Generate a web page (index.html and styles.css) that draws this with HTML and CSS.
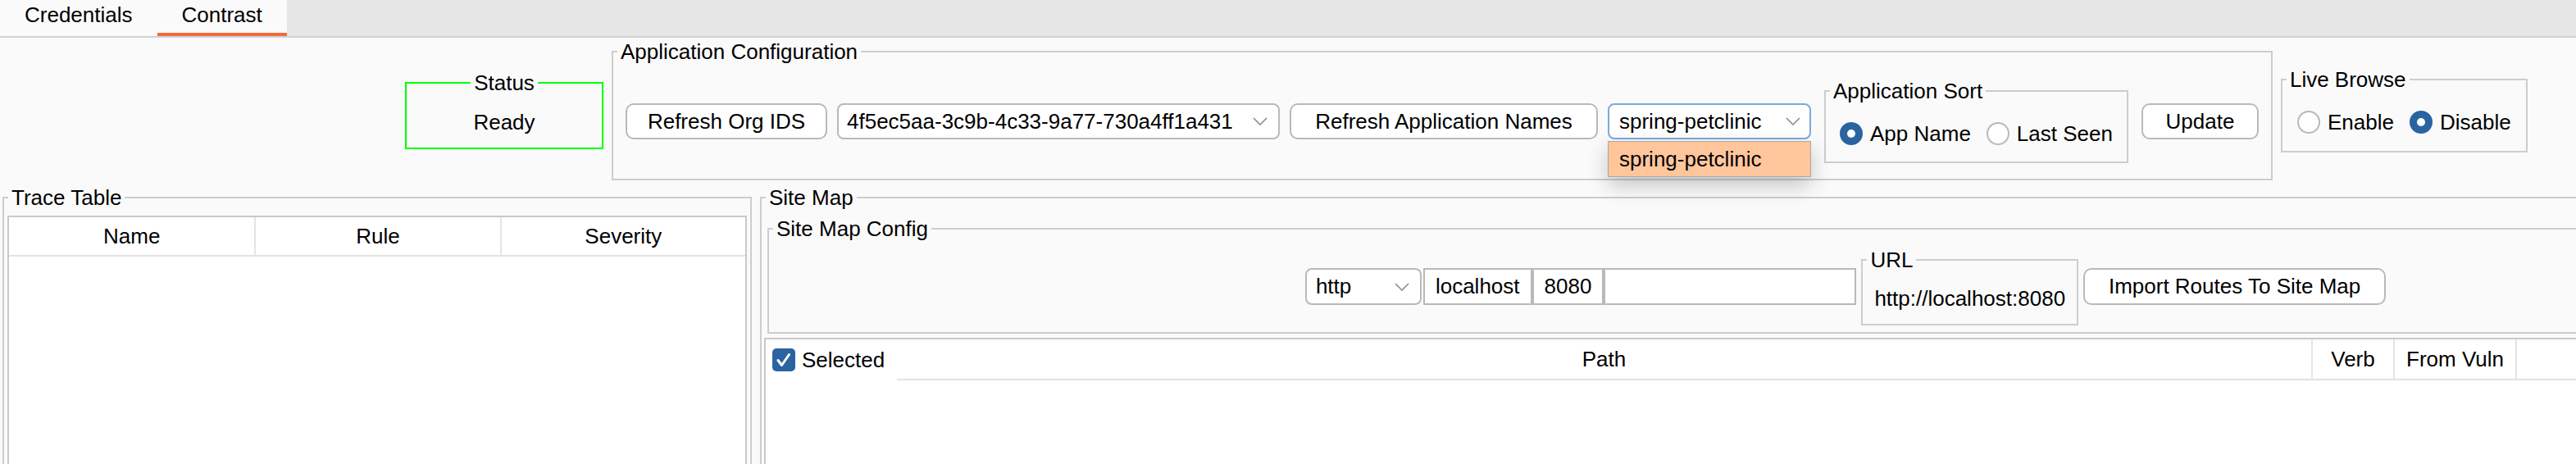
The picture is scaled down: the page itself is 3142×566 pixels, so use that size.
FILE: index.html
```html
<!DOCTYPE html>
<html lang="en">
<head>
<meta charset="utf-8">
<title>Contrast</title>
<link rel="stylesheet" href="styles.css">
</head>
<body>
<div class="tabbar">
  <div class="tab">Credentials</div>
  <div class="tab active">Contrast</div>
</div>

<div class="top-row">
  <fieldset class="group status">
    <legend>Status</legend>
    <div class="status-text">Ready</div>
  </fieldset>

  <fieldset class="group app-config">
    <legend>Application Configuration</legend>
    <div class="config-row">
      <button class="btn btn-org">Refresh Org IDS</button>
      <div class="combo combo-org">
        <span>4f5ec5aa-3c9b-4c33-9a77-730a4ff1a431</span>
        <svg class="chev" viewBox="0 0 18 10"><polyline points="1,1 9,9 17,1"/></svg>
      </div>
      <button class="btn btn-apps">Refresh Application Names</button>
      <div class="combo-wrap">
        <div class="combo combo-app">
          <span>spring-petclinic</span>
          <svg class="chev" viewBox="0 0 18 10"><polyline points="1,1 9,9 17,1"/></svg>
        </div>
        <div class="popup">spring-petclinic</div>
      </div>
      <fieldset class="group app-sort">
        <legend>Application Sort</legend>
        <div class="radio-row">
          <span class="radio-item"><span class="radio checked"></span>App Name</span>
          <span class="radio-item"><span class="radio"></span>Last Seen</span>
        </div>
      </fieldset>
      <button class="btn btn-update">Update</button>
    </div>
  </fieldset>

  <fieldset class="group live">
    <legend>Live Browse</legend>
    <div class="radio-row">
      <span class="radio-item"><span class="radio"></span>Enable</span>
      <span class="radio-item"><span class="radio checked"></span>Disable</span>
    </div>
  </fieldset>
</div>

<div class="bottom-row">
  <fieldset class="group trace">
    <legend>Trace Table</legend>
    <div class="table trace-table">
      <div class="thead trace-head">
        <div class="th">Name</div>
        <div class="th sep">Rule</div>
        <div class="th sep">Severity</div>
      </div>
    </div>
  </fieldset>

  <fieldset class="group sitemap">
    <legend>Site Map</legend>
    <fieldset class="group sm-config">
      <legend>Site Map Config</legend>
      <div class="sm-row">
        <div class="combo combo-proto">
          <span>http</span>
          <svg class="chev" viewBox="0 0 18 10"><polyline points="1,1 9,9 17,1"/></svg>
        </div>
        <div class="fields">
          <div class="field">localhost</div>
          <div class="field">8080</div>
          <div class="field field-path"></div>
        </div>
        <fieldset class="group url">
          <legend>URL</legend>
          <div class="url-text">http://localhost:8080</div>
        </fieldset>
        <button class="btn btn-import">Import Routes To Site Map</button>
      </div>
    </fieldset>
    <div class="table site-table">
      <div class="thead site-head">
        <div class="th th-select">
          <span class="checkbox"><svg viewBox="0 0 28 28"><path d="M7 14.5 L11.5 20.5 L20.5 7.5"/></svg></span>Selected
        </div>
        <div class="th">Path</div>
        <div class="th sep">Verb</div>
        <div class="th sep">From Vuln</div>
        <div class="th sep"></div>
      </div>
    </div>
  </fieldset>
</div>
</body>
</html>
```

FILE: styles.css
```css
* { box-sizing: border-box; }

html, body { margin: 0; padding: 0; }

body {
  width: 3142px;
  height: 566px;
  overflow: hidden;
  background: #fafafa;
  font-family: "Liberation Sans", Arial, sans-serif;
  font-size: 26px;
  color: #000;
}

/* ---------- tabs ---------- */
.tabbar {
  display: flex;
  background: #e6e6e6;
  border-bottom: 2px solid #d0d3d3;
}
.tab {
  height: 44px;
  padding: 0 30px 4px;
  line-height: 36px;
  border-bottom: 4px solid transparent;
  background: #fafafa;
}
.tab.active { border-bottom-color: #f26b3a; }

/* ---------- titled groups ---------- */
.group {
  --px: 0px;
  margin: 0;
  min-width: 0;
  border: 2px solid #cdcdcd;
  padding: 0 var(--px);
}
.group > legend {
  margin-left: calc(5px - var(--px));
  padding: 0 4px;
  line-height: 30px;
  font-size: 26px;
}

/* ---------- controls ---------- */
.btn {
  font: inherit;
  color: #000;
  background: #fff;
  border: 2px solid #bcb8b8;
  border-radius: 10px;
  height: 44px;
  line-height: 40px;
  padding: 0;
  text-align: center;
  flex-shrink: 0;
}
.btn-org { width: 246px; }
.btn-apps { width: 376px; }
.btn-update { width: 143px; }
.btn-import { width: 369px; height: 45px; line-height: 41px; }

.combo {
  display: flex;
  align-items: center;
  justify-content: space-between;
  height: 44px;
  line-height: 40px;
  padding: 0 13px 0 10px;
  background: #fff;
  border: 2px solid #bcb8b8;
  border-radius: 8px;
  flex-shrink: 0;
}
.combo-org { width: 540px; }
.combo-app { width: 248px; border-color: #7fa9dd; padding-left: 12px; padding-right: 11px; }
.combo-proto { width: 142px; height: 45px; line-height: 41px; padding-left: 11px; }

.chev { width: 18px; height: 10px; flex-shrink: 0; }
.chev polyline { fill: none; stroke: #8a8a8a; stroke-width: 1.6; }

.combo-wrap { position: relative; flex-shrink: 0; }
.popup {
  position: absolute;
  top: calc(100% + 2px);
  left: 0;
  width: 100%;
  height: 44px;
  line-height: 42px;
  padding-left: 13px;
  background: #ffc69c;
  border: 1px solid #a8a8a8;
  box-shadow: 0 10px 26px rgba(0, 0, 0, 0.22);
  z-index: 5;
}

.radio-row {
  display: flex;
  align-items: center;
  gap: 19px;
  line-height: 30px;
}
.radio-item { display: flex; align-items: center; gap: 9px; }
.radio {
  width: 28px;
  height: 28px;
  border-radius: 50%;
  border: 2px solid #b9b9b9;
  background: #fff;
  display: inline-flex;
  align-items: center;
  justify-content: center;
  flex-shrink: 0;
}
.radio.checked { background: #2a64a0; border-color: #2a64a0; }
.radio.checked::after {
  content: "";
  width: 10px;
  height: 10px;
  border-radius: 50%;
  background: #fff;
}

.checkbox {
  width: 28px;
  height: 28px;
  border-radius: 5px;
  background: #2a64a0;
  display: inline-flex;
  flex-shrink: 0;
}
.checkbox svg { width: 28px; height: 28px; }
.checkbox path {
  fill: none;
  stroke: #fff;
  stroke-width: 3;
  stroke-linecap: round;
  stroke-linejoin: round;
}

/* ---------- top row ---------- */
.top-row {
  display: flex;
  align-items: center;
  gap: 10px;
  padding: 2px 0 0 494px;
}

.status {
  width: 242px;
  border-color: #00ff00;
  padding-top: 18px;
  padding-bottom: 16px;
  text-align: center;
}
.status > legend { margin: 0 auto; }
.status-text { line-height: 30px; }

.app-config { --px: 15px; padding-top: 18px; padding-bottom: 19px; }
.config-row {
  display: flex;
  align-items: center;
  gap: 12px;
}
.app-sort { margin: 0 4px; padding-top: 22px; padding-bottom: 19px; flex-shrink: 0; }
.app-sort .radio-row { padding: 0 17px; }

.live { padding-top: 22px; padding-bottom: 20px; }
.live .radio-row { padding: 0 18px; }

/* ---------- bottom row ---------- */
.bottom-row {
  display: flex;
  align-items: flex-start;
  gap: 10px;
  margin-top: 6px;
  padding-left: 3px;
}

.table { background: #fff; border: 2px solid #c9c9c9; }
.thead { display: grid; }
.th { text-align: center; white-space: nowrap; }
.th.sep { border-left: 2px solid #e4e4e4; }

.trace { --px: 4px; width: 914px; flex-shrink: 0; padding-top: 7px; height: 420px; }
.trace-table { height: 380px; }
.trace-head {
  grid-template-columns: repeat(3, 1fr);
  border-bottom: 2px solid #e2e2e2;
}
.trace-head .th { line-height: 46px; }

.sitemap { --px: 3px; width: 2648px; flex-shrink: 0; padding-top: 8px; height: 420px; }
.sm-config { margin: 0 4px 5px; padding-top: 8px; padding-bottom: 8px; }
.sm-row {
  display: flex;
  align-items: center;
  justify-content: center;
  gap: 6px;
}
.fields { display: flex; margin-left: -4px; }
.field {
  height: 45px;
  line-height: 41px;
  padding: 0 13px;
  background: #fff;
  border: 2px solid #bcb8b8;
}
.field-path { width: 308px; }

.url { --px: 14px; padding-top: 17px; padding-bottom: 16px; flex-shrink: 0; }
.url-text { line-height: 30px; white-space: nowrap; }

.site-table { height: 220px; }
.site-head { grid-template-columns: 160px 1725px 100px 149px 1fr; }
.site-head .th {
  height: 50px;
  line-height: 48px;
  border-bottom: 2px solid #e2e2e2;
}
.site-head .th-select {
  border-bottom: none;
  display: flex;
  align-items: center;
  gap: 8px;
  padding-left: 8px;
  text-align: left;
}
```
